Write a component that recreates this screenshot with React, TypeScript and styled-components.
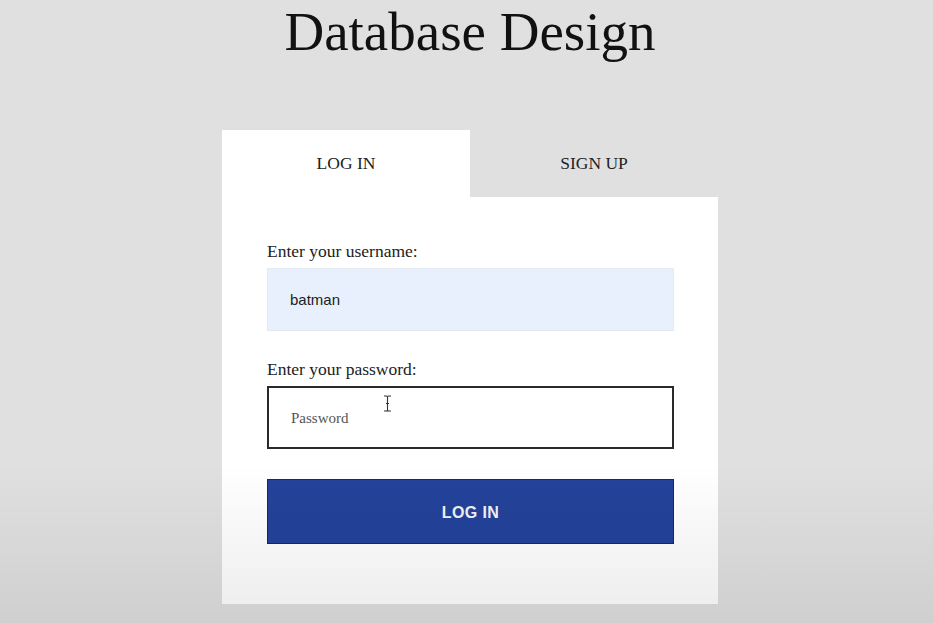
import styled, { createGlobalStyle } from 'styled-components';

const GlobalStyle = createGlobalStyle`
	html, body {
		margin: 0;
		padding: 0;
		background: #e0e0e0;
	}
	body {
		font-family: 'Liberation Serif', 'Times New Roman', serif;
		min-height: 623px;
	}
`;

const Page = styled.div`
	position: relative;
	min-height: 623px;
	padding-left: 7px;
	box-sizing: border-box;
	overflow: hidden;

	/* darker fade at the bottom of the frame */
	&::after {
		content: '';
		position: absolute;
		left: 0;
		right: 0;
		bottom: 0;
		height: 160px;
		background: linear-gradient(to bottom, rgba(0, 0, 0, 0), rgba(0, 0, 0, 0.075));
		pointer-events: none;
	}
`;

const Title = styled.h1`
	margin: 0;
	padding-top: 1px;
	text-align: center;
	font-family: 'Liberation Serif', 'Times New Roman', serif;
	font-weight: 400;
	font-size: 55px;
	line-height: 61px;
	color: #111;
`;

const Card = styled.div`
	width: 496px;
	margin: 68px auto 0;
`;

const TabRow = styled.div`
	display: grid;
	grid-template-columns: 1fr 1fr;
`;

const TabButton = styled.div<{ $active?: boolean }>`
	height: 67px;
	display: flex;
	align-items: center;
	justify-content: center;
	font-size: 17.5px;
	color: #222;
	background: ${(p) => (p.$active ? '#ffffff' : 'transparent')};
`;

const Panel = styled.form`
	background: #fff;
	padding: 44px 44px 60px 45px;
	display: flex;
	flex-direction: column;
`;

const Label = styled.label`
	font-size: 17.5px;
	line-height: 20px;
	color: #222;
	margin-bottom: 7px;
`;

const Field = styled.div<{ $filled?: boolean }>`
	position: relative;
	height: 63px;
	box-sizing: border-box;
	display: flex;
	align-items: center;
	padding-left: 22px;
	margin-bottom: 28px;
	background: ${(p) => (p.$filled ? '#e8f0fe' : '#fff')};
	border: ${(p) => (p.$filled ? '1px solid #e4e9f2' : '2px solid #2a2a2a')};
`;

const Value = styled.span`
	font-family: 'Liberation Sans', Arial, sans-serif;
	font-size: 15px;
	color: #222;
`;

const Placeholder = styled.span`
	font-family: 'Liberation Serif', 'Times New Roman', serif;
	font-size: 15px;
	color: #555;
	margin-top: 2px;
`;

const Cursor = styled.svg`
	position: absolute;
	left: 114px;
	top: 7px;
`;

const Submit = styled.button`
	height: 65px;
	margin-top: 2px;
	padding-top: 4px;
	background: #23429a;
	border: 1px solid #17285c;
	color: #f2f2f8;
	font-family: 'Liberation Sans', Arial, sans-serif;
	font-weight: 700;
	font-size: 16px;
	letter-spacing: 0.4px;
	cursor: pointer;
`;

export default function App() {
	return (
		<>
			<GlobalStyle />
			<Page>
				<Title>Database Design</Title>
				<Card>
					<TabRow>
						<TabButton $active>LOG IN</TabButton>
						<TabButton>SIGN UP</TabButton>
					</TabRow>
					<Panel onSubmit={(e) => e.preventDefault()}>
						<Label>Enter your username:</Label>
						<Field $filled>
							<Value>batman</Value>
						</Field>
						<Label>Enter your password:</Label>
						<Field>
							<Placeholder>Password</Placeholder>
							<Cursor width="9" height="17" viewBox="0 0 9 17">
								<path
									d="M1 1h2.5c.6 0 1 .4 1 1v13c0 .6.4 1 1 1H8M8 1H5.5c-.6 0-1 .4-1 1M4.5 15c0 .6-.4 1-1 1H1M3 8.5h3"
									fill="none"
									stroke="#333"
									strokeWidth="1.1"
								/>
							</Cursor>
						</Field>
						<Submit type="submit">LOG IN</Submit>
					</Panel>
				</Card>
			</Page>
		</>
	);
}
